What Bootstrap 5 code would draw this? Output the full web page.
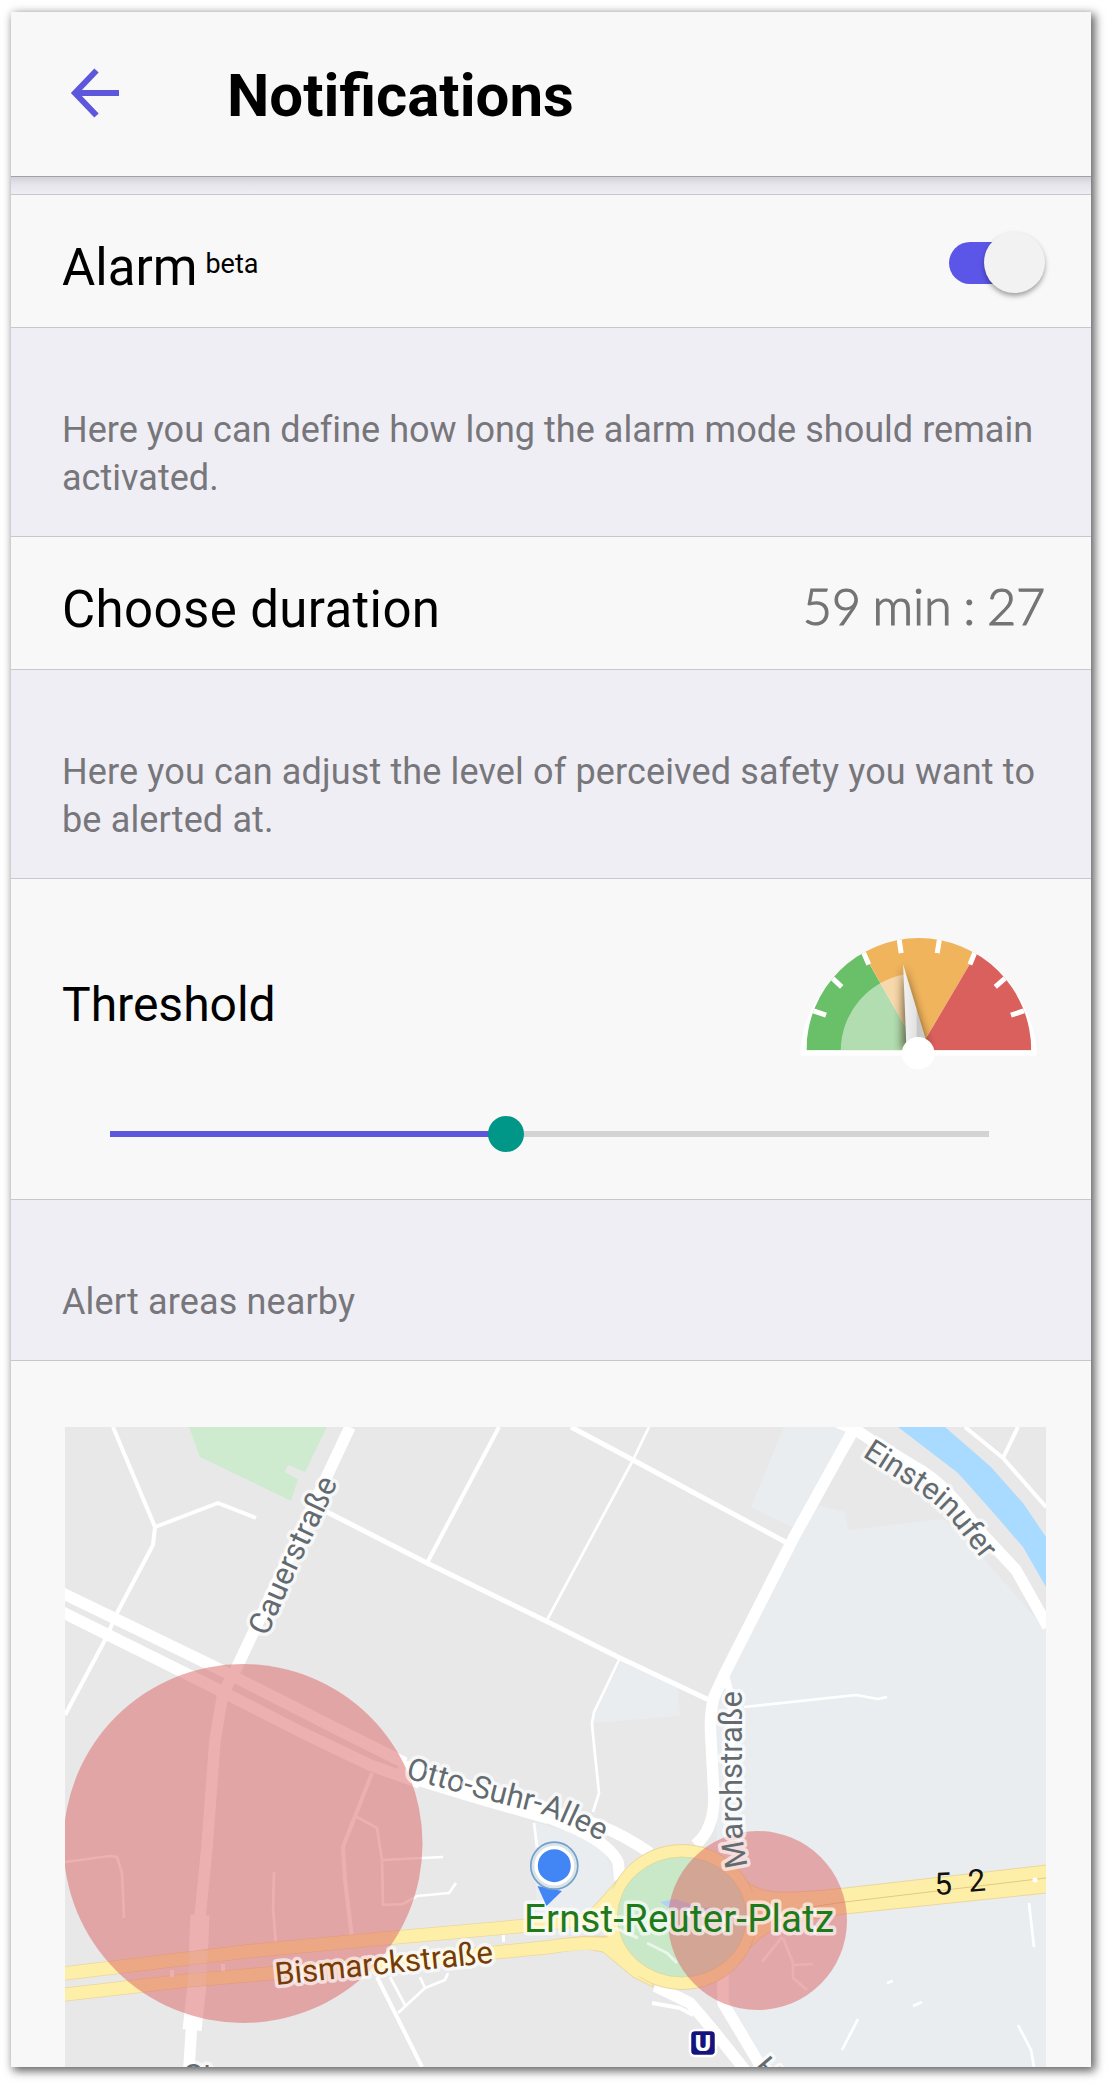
<!DOCTYPE html>
<html lang="en">
<head>
<meta charset="utf-8">
<meta name="viewport" content="width=device-width, initial-scale=1">
<title>Notifications</title>
<link href="https://cdn.jsdelivr.net/npm/bootstrap@5.3.0/dist/css/bootstrap.min.css" rel="stylesheet">
<style>
  body { background: #fff; font-family: Roboto, "Liberation Sans", sans-serif; color: #000; padding: 12px 19px 19px 11px; }
  .screen { height: 2055px; background: #efeef4; box-shadow: 3px 3px 9px 1px rgba(0,0,0,.62); }
  .topbar { height: 165px; flex: none; background: #f8f8f8; border-bottom: 1px solid #a3a2aa; padding: 0 59px 2px; }
  .topbar h1 { font-size: 60px; font-weight: 700; line-height: 72px; margin-left: 107px; padding-top: 6px; }
  .gap-strip { height: 17px; flex: none; background: linear-gradient(#d3d2d9, #e6e5ec 45%, #efeef4); }
  .cell { flex: none; background: #f8f8f8; border: solid #c8c7cc; border-width: 1px 0; padding: 0 46px 0 51px; }
  .cell-row { height: 134px; font-size: 51px; line-height: 60px; }
  .cell-row .title-text { padding-top: 13px; }
  .wide-text { letter-spacing: .38px; }
  .beta { font-size: 27px; line-height: 1; margin-left: 8px; position: relative; top: -12px; }
  .hint { flex: none; color: #77767b; font-size: 36px; line-height: 48px; padding: 0 51px 34px; }
  .hint p { margin: 0; white-space: nowrap; letter-spacing: .03px; }
  .hint .loose { letter-spacing: .14px; }
  .toggle { width: 96px; height: 42px; border-radius: 21px; background: linear-gradient(90deg, #5b56e8 70%, transparent 70%); margin-top: 3px; }
  .toggle .knob { width: 61px; height: 61px; border-radius: 50%; background: #f2f2f2; box-shadow: 0 3px 5px rgba(0,0,0,.35); flex: none; }
  .duration { font-family: Lato, sans-serif; font-weight: 300; color: #747474; font-size: 50.500px; padding-top: 6px; letter-spacing: -.3px; word-spacing: -1.500px; -webkit-text-stroke: 1.2px #747474; }
  .threshold { height: 322px; padding: 56px 54px 0 51px; }
  .threshold .title-text { font-size: 48px; line-height: 60px; padding-top: 2px; }
  .slide-track { height: 6px; margin: 59px 48px 0; background: #d3d3d3; }
  .slide-fill { height: 6px; background: #5d57dc; }
  .slide-thumb { width: 36px; height: 36px; border-radius: 50%; background: #009688; flex: none; margin-left: -18px; }
  .mapcell { flex: 1 1 0; min-height: 0; background: #f8f8f8; border-top: 1px solid #c8c7cc; padding: 66px 45px 0 54px; }
  .road { fill: none; stroke: #fff; stroke-linejoin: round; }
  .street { font-size: 31px; fill: #636b70; stroke: rgba(255,255,255,.65); stroke-width: 7px; paint-order: stroke; stroke-linejoin: round; }
</style>
</head>
<body>
<main class="screen d-flex flex-column">
  <header class="topbar d-flex align-items-center">
    <svg width="50" height="50" viewBox="0 0 50 50" fill="none" stroke="#5d57dc" stroke-width="6"><path d="M26.500 2.500L5 25L26.500 47.500M4 25H49"/></svg>
    <h1 class="mb-0">Notifications</h1>
  </header>
  <div class="gap-strip"></div>

  <section class="cell cell-row d-flex align-items-center justify-content-between">
    <div class="title-text">Alarm<span class="beta">beta</span></div>
    <div class="toggle d-flex align-items-center justify-content-end" role="switch" aria-checked="true"><span class="knob"></span></div>
  </section>

  <div class="hint d-flex align-items-end" style="height:208px"><p>Here you can define how long the alarm mode should remain<br>activated.</p></div>

  <section class="cell cell-row d-flex align-items-center justify-content-between">
    <div class="title-text wide-text">Choose duration</div>
    <div class="duration">59 min : 27</div>
  </section>

  <div class="hint d-flex align-items-end" style="height:208px"><p class="loose">Here you can adjust the level of perceived safety you want to<br>be alerted at.</p></div>

  <section class="cell threshold">
    <div class="d-flex align-items-center justify-content-between">
      <div class="title-text">Threshold</div>
      <svg width="237" height="137" viewBox="61 77 710 410">
        <defs>
          <linearGradient id="needle" x1="0" x2="1" y1="0" y2="0"><stop offset="0" stop-color="#f2f2f2"/><stop offset=".5" stop-color="#e2e2e2"/><stop offset=".56" stop-color="#c6c6c6"/><stop offset="1" stop-color="#cfcfcf"/></linearGradient>
          <filter id="soft" x="-1" y="-.3" width="3" height="1.600"><feGaussianBlur stdDeviation="13"/></filter>
          <clipPath id="dial"><path d="M80 423A337 337 0 0 1 754 423Z"/></clipPath>
        </defs>
        <path d="M62 438V423A355 346 0 0 1 770 423V438Z" fill="#fff"/>
        <g clip-path="url(#dial)">
          <path d="M417 423L80 423V60H210Z" fill="#6abf69"/>
          <path d="M417 423L210 60H631Z" fill="#f0b45d"/>
          <path d="M417 423L631 60H760V423Z" fill="#da605d"/>
          <path d="M417 423H183A234 234 0 0 1 372 195Z" fill="#fff" opacity=".48"/>
          <path d="M370 170L366 423H448Z" fill="#33220c" opacity=".62" filter="url(#soft)"/>
          <g stroke="#fff" stroke-width="15"><path d="M95 302L139 317M152 201L186 232M248 122L267 165M357 82L364 131M480 82L472 131M588 122L570 165M682 201L646 232M738 302L693 317"/></g>
        </g>
        <path d="M370 165L380 420L447 420Z" fill="url(#needle)"/>
        <circle cx="415" cy="431" r="49" fill="#fff"/>
      </svg>
    </div>
    <div class="slide-track d-flex align-items-center"><div class="slide-fill" style="width:45.050%"></div><div class="slide-thumb"></div></div>
  </section>

  <div class="hint d-flex align-items-end" style="height:160px"><p class="loose">Alert areas nearby</p></div>

  <section class="mapcell overflow-hidden">
    <svg class="d-block" width="981" height="640" viewBox="65 1427 981 640">
      <defs>
        <path id="p-cauer" d="M267 1637L297 1569L342 1474"/>
        <path id="p-otto" d="M405 1778L450 1790L487 1800L535 1812Q560 1819 616 1849"/>
        <path id="p-march" d="M748 1866Q742 1842 742 1820V1670"/>
        <path id="p-ein" d="M862 1456L898 1479Q934 1500 952 1521L983 1561"/>
        <path id="p-bis" d="M276 1985L500 1962"/>
      </defs>
      <rect x="65" y="1427" width="981" height="640" fill="#e8e8e8"/>
      <g fill="#e9edf0">
        <path d="M805 1507L816 1505L845 1512L848 1530L943 1519L976 1550L1046 1630V2067H760L720 1990L714 1700Z"/>
        <path d="M784 1427H865L794 1528L751 1507L758 1490Z"/>
        <path d="M621 1662L678 1688L680 1716L594 1723V1712Z"/>
        <path d="M534 1822L600 1840L616 1880L590 1918L537 1925Z"/>
      </g>
      <path d="M189 1427H327L305 1472L288 1465L285 1472L298 1479L291 1501L200 1457Z" fill="#ceebcf"/>
      <path d="M898 1427H945L991 1467L1023 1503L1046 1537V1587L1023 1547L991 1510L958 1473Z" fill="#a9daff"/>

      <g class="road">
        <g stroke-width="2.700">
          <path d="M357 1817L377 1828L382 1860L383 1905L403 1904L417 1896L449 1893L456 1883M382 1860L443 1857M274 1872L273 1907L276 1947M65 1862L110 1856L117 1857L122 1873L124 1918"/>
          <path d="M390 1977L405 2005M398 2013L425 1988L445 1980L448 1973M420 1977L425 1988M534 1823L537 1847"/>
          <path d="M744 1707L856 1695L878 1699L887 1697M649 1427L633 1460L547 1620M620 1658L594 1712L592 1723L593 1735L599 1793L593 1812"/>
          <path d="M782 1937L762 1962M783 1938L793 1963V1978L807 1990M793 1965L813 1964M858 2019L842 2050M1029 1903L1034 1947M887 1983L893 1981M913 2006L922 2002M1018 2025L1031 2050L1034 2067"/>
        </g>
        <g stroke-width="4">
          <path d="M113 1427L155 1527L153 1545L117 1613L105 1640L65 1715M155 1527L218 1503L256 1518"/>
          <path d="M499 1427L427 1563M965 1427L1003 1458L1046 1507M1018 1427L1003 1458M372 1773L343 1847L345 1880L352 1938M377 1977L422 2067M652 2003L680 2008L693 2015"/>
        </g>
        <path stroke-width="5" d="M327 1512L427 1563L550 1623L620 1658L709 1700M571 1427L633 1460L791 1545"/>
        <g stroke-width="11.500">
          <path d="M350 1427L237 1667L223 1693L215 1740L207 1847L200 1917M192 2020L189 2067"/>
          <path d="M60 1592L217 1668L333 1727L405 1763M60 1611L217 1689L303 1733L370 1765L420 1783"/>
          <path d="M856 1425L794 1537L725 1673L714 1697Q709 1715 711 1740L714 1797Q714 1830 695 1845"/>
          <path d="M828 1418L856 1430L874 1442L925 1473Q950 1490 976 1527L1016 1570L1048 1627"/>
          <path d="M545 1816L576 1829Q610 1845 618 1862L620 1880M545 1812Q600 1818 650 1853"/>
          <path d="M655 1986L690 2003L713 2030L745 2070M723 1973V2003L763 2070"/>
        </g>
        <path d="M725 1673L731 1696V1800" stroke-width="7"/>
        <path d="M398 1769L470 1791L550 1814" stroke-width="21"/>
        <path d="M200 1915L197 1985L192 2030" stroke-width="19"/>
      </g>

      <!-- primary road and roundabout -->
      <g fill="none" stroke-linejoin="round">
        <path d="M60 1985L200 1966L400 1948L560 1929" stroke="#e8e9e6" stroke-width="12"/>
        <g stroke="#ecd69c" stroke-width="14"><path d="M60 1974L250 1951L400 1937L523 1926L600 1918M60 1995L183 1981L400 1962L550 1947Q585 1941 610 1943"/></g>
        <path d="M620 1877L597 1903L585 1914V1920L640 1920ZM587 1949L603 1952L633 1977L653 1987L645 1930L600 1938Z" fill="#fdefa8" stroke="#ecd69c"/>
        <path d="M735 1868Q748 1890 775 1892Q800 1893 845 1888L1047 1865V1893L845 1914L800 1921Q770 1925 748 1950Z" fill="#fdefa8" stroke="#ecd69c"/>
        <ellipse cx="682" cy="1917" rx="75" ry="72.500" fill="#fdefa8" stroke="#ecd69c"/>
        <path d="M622 1879L600 1903L588 1916L612 1941L606 1950L634 1975L645 1978L640 1870Z" fill="#fdefa8"/>
        <g stroke="#fdefa8" stroke-width="12.500"><path d="M60 1974L250 1951L400 1937L523 1926L612 1917M60 1995L183 1981L400 1962L550 1947Q585 1941 614 1945"/></g>
        <path d="M735 1878Q750 1896 775 1900L800 1912Q765 1922 745 1945Z" fill="#fdefa8"/>
        <path d="M790 1910L845 1902L1046 1878" stroke="#e3c982"/>
      </g>
      <ellipse cx="682" cy="1917" rx="64.500" ry="60" fill="#c8e8c8" stroke="#e0dba0"/>
      <path d="M660 1902L675 1899L700 1907L728 1910L724 1915L672 1910Z" fill="#b3d2f4"/>
      <path class="road" d="M647 1943L667 1953L677 1963M615 1928L638 1938" stroke-width="3" opacity=".6"/>
      <path class="road" d="M199 1950L195 2005" stroke-width="18" opacity=".32"/>
      <g fill="#fff"><circle cx="1035" cy="1880" r="2.500"/><path d="M170 1970h4v7h-4zM221 1964h4v7h-4zM502 1935h3v7h-3z"/></g>

      <!-- alert zones -->
      <g fill="#dc6262" fill-opacity=".5"><circle cx="243" cy="1843.500" r="179.500"/><circle cx="757.500" cy="1920.500" r="89.500"/></g>

      <g class="street">
        <text style="font-size:31.200px"><textPath href="#p-cauer">Cauerstraße</textPath></text>
        <text><textPath href="#p-otto">Otto-Suhr-Allee</textPath></text>
        <text><textPath href="#p-march">Marchstraße</textPath></text>
        <text style="font-size:30.500px"><textPath href="#p-ein">Einsteinufer</textPath></text>
        <text style="font-size:31.300px;fill:#753c08"><textPath href="#p-bis">Bismarckstraße</textPath></text>
        <text x="184" y="2086">St</text>
        <text transform="translate(752 2068) rotate(50)">Ha</text>
      </g>
      <text class="street" x="524" y="1932" textLength="310" style="font-size:38.500px;fill:#1f7a1c">Ernst-Reuter-Platz</text>
      <path d="M537.500 1886L562 1891L546.500 1906Z" fill="#4285f4"/>
      <circle cx="554.300" cy="1865.700" r="23.500" fill="#dbe3e8" stroke="#72a1cd" stroke-width="1.700"/>
      <circle cx="554.300" cy="1865.700" r="18.200" fill="#4285f4" stroke="#fff" stroke-width="3.400"/>
      <g font-size="31" fill="#111"><text transform="translate(935 1895) rotate(-3)">5</text><text transform="translate(969 1892) rotate(-5)">2</text></g>
      <rect x="690" y="2030" width="26" height="26" rx="5" fill="#14147c" stroke="#fff" stroke-width="2.500"/>
      <text x="703" y="2051" text-anchor="middle" font-size="22" font-weight="700" fill="#fff" font-family="DejaVu Sans, sans-serif">U</text>
    </svg>
  </section>
</main>
<script src="https://cdn.jsdelivr.net/npm/bootstrap@5.3.0/dist/js/bootstrap.bundle.min.js"></script>
</body>
</html>
